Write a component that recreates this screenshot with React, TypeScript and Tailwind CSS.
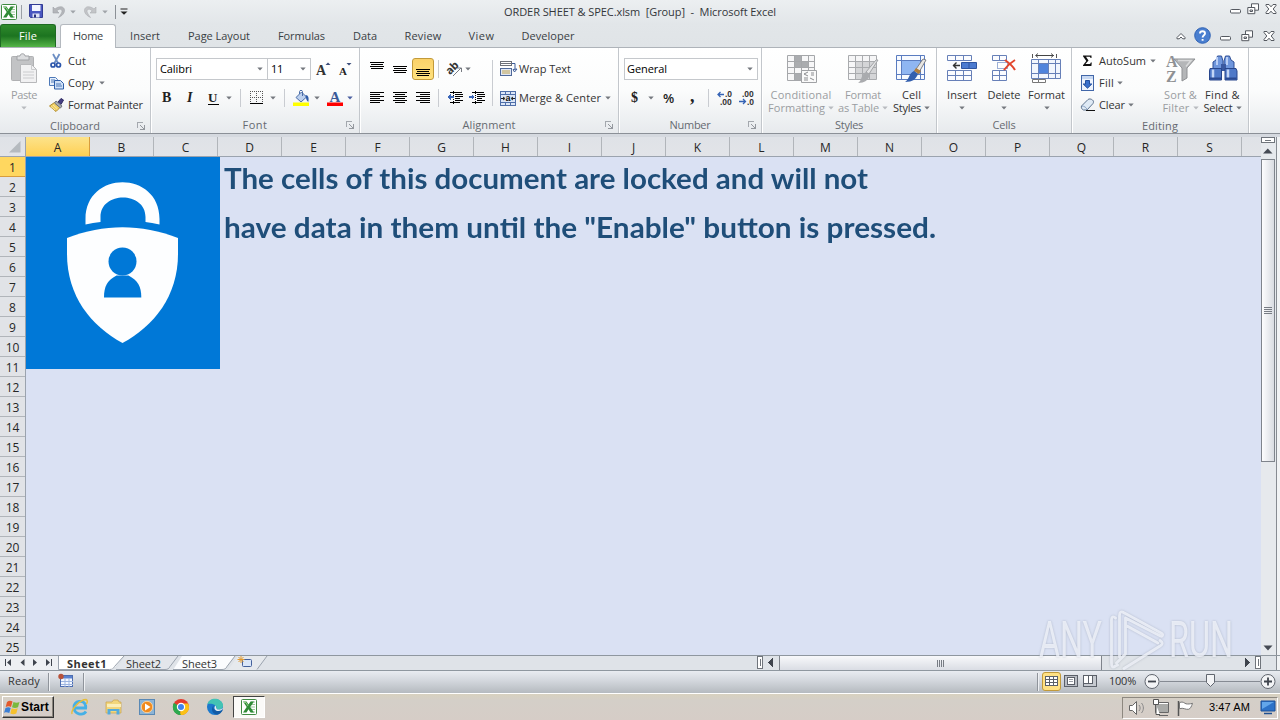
import React, { useLayoutEffect, useRef } from "react";

type FitProps = { text: string; w: number; className?: string; stretch?: boolean };

/* Text that fills a given width, by tracking or by horizontal scaling. */
function Fit({ text, w, className = "", stretch = false }: FitProps) {
  const ref = useRef<HTMLSpanElement>(null);
  useLayoutEffect(() => {
    const el = ref.current;
    if (!el) return;
    el.style.letterSpacing = "0px";
    el.style.transform = "none";
    const natural = el.getBoundingClientRect().width;
    if (stretch) el.style.transform = `scaleX(${w / natural})`;
    else el.style.letterSpacing = `${(w - natural) / text.length}px`;
  }, [text, w, stretch]);
  return (
    <span className={"block shrink-0 whitespace-nowrap " + className} style={{ width: w }}>
      <span ref={ref} className="inline-block origin-left">
        {text}
      </span>
    </span>
  );
}

type IcoProps = {
  x: number;
  y: number;
  w: number;
  h: number;
  className?: string;
  crisp?: boolean;
  children: React.ReactNode;
};

function Ico({ x, y, w, h, className = "", crisp = false, children }: IcoProps) {
  return (
    <svg
      width={w}
      height={h}
      viewBox={`${x} ${y} ${w} ${h}`}
      fill="none"
      shapeRendering={crisp ? "crispEdges" : "auto"}
      className={"block shrink-0 overflow-visible " + className}
    >
      {children}
    </svg>
  );
}

function Caret({ className = "", color = "#74787e" }: { className?: string; color?: string }) {
  return (
    <Ico x={0} y={0} w={6} h={4} className={className}>
      <path d="M.3.5h5.400L3 3.500z" fill={color} />
    </Ico>
  );
}

function Sep({ className = "" }: { className?: string }) {
  return <div className={"w-px shrink-0 bg-[#c9ccd1] " + className} />;
}

function Launcher() {
  return (
    <Ico x={0} y={0} w={8} h={8} crisp className="absolute right-[5px] top-[6px]">
      <path d="M.5 6V.5H6" stroke="#a4a8ae" />
      <path d="M7.500 3v4.500H3M3 3l4 4" stroke="#94989e" />
    </Ico>
  );
}

function Group({ label, lw, className, launcher, children }: { label: string; lw: number; className: string; launcher?: boolean; children: React.ReactNode }) {
  return (
    <div className={"flex h-full shrink-0 flex-col border-r border-[#c3c7cc] shadow-[1px_0_0_#fff] " + className}>
      <div className="h-[68px]">{children}</div>
      <div className="relative flex h-[18px] items-center justify-center pr-2 pt-[2px] text-[#666a70]">
        <Fit text={label} w={lw} className="ml-2 text-[11px]" />
        {launcher && <Launcher />}
      </div>
    </div>
  );
}

function Lines({ x, y, rows }: { x: number; y: number; rows: [number, number][] }) {
  return (
    <>
      {rows.map(([a, b], i) => (
        <path key={i} d={`M${x + a} ${y + i * 2 + 0.5}H${x + b}`} stroke="#000" />
      ))}
    </>
  );
}

function AlignIcon({ kind, className = "" }: { kind: "l" | "c" | "r"; className?: string }) {
  const short: [number, number] = kind === "l" ? [0, 10] : kind === "c" ? [2, 12] : [4, 14];
  const rows: [number, number][] = [[0, 14], short, [0, 14], short, [0, 14], short];
  return (
    <Ico x={0} y={0} w={14} h={12} crisp className={className}>
      <Lines x={0} y={0} rows={rows} />
    </Ico>
  );
}

function VAlign({ pos, className = "" }: { pos: number; className?: string }) {
  return (
    <Ico x={0} y={0} w={14} h={16} crisp className={className}>
      <Lines x={0} y={pos} rows={[[0, 14], [1, 13], [0, 14], [1, 13]]} />
    </Ico>
  );
}

function BigButton({ icon, a, aw, b, bw, muted, className }: { icon: React.ReactNode; a: string; aw: number; b?: string; bw?: number; muted?: boolean; className: string }) {
  const color = muted ? "#b8bbbf" : "#74787e";
  return (
    <div className={"flex shrink-0 flex-col items-center pt-[5px] text-[11px] leading-[13px] " + (muted ? "text-[#9a9da1] " : "text-[#333] ") + className}>
      <div className="flex h-[35px] items-start justify-center">{icon}</div>
      <Fit text={a} w={aw} />
      <div className="flex h-[13px] items-center justify-center gap-[3px]">
        {b && <Fit text={b} w={bw || 0} />}
        <Caret color={color} />
      </div>
    </div>
  );
}

function ExcelIcon() {
  return (
    <Ico x={0} y={0} w={16} h={16}>
      <rect x=".5" y=".5" width="15" height="15" rx="1" fill="#fff" stroke="#3f8a42" />
      <path d="M10 3h4M10 5.500h4M10 8h4M10 10.500h4M10 13h4" stroke="#9cc79a" />
      <path d="M2 2.500h3.500l2 3 2-3H13L9.300 8l3.700 5.500H9.500l-2-3.200-2 3.200H2L5.700 8z" fill="#2f8b36" />
      <path d="M3 3.500h2l2 3.500" stroke="#90cf87" />
    </Ico>
  );
}

function WinButtons({ kind }: { kind: "min" | "restore" | "close" }) {
  return (
    <Ico x={0} y={0} w={12} h={12}>
      {kind === "min" && <rect x="1.500" y="6.500" width="10" height="3.500" rx="1" fill="#fff" stroke="#555960" />}
      {kind === "restore" && (
        <>
          <path d="M4.500.8h7v6.400h-7z" fill="#fff" stroke="#555960" />
          <path d="M.8 4.500h7v6.200h-7z" fill="#fff" stroke="#555960" />
          <path d="M3 7h2.500v1.500H3z" stroke="#555960" />
        </>
      )}
      {kind === "close" && (
        <path d="M1 1.500h3l2 2.300 2-2.300h3v1L8.200 6l2.800 3.500v1H8L6 8.200 4 10.500H1v-1L3.800 6 1 2.500z" fill="#fff" stroke="#555960" />
      )}
    </Ico>
  );
}

function TitleBar() {
  return (
    <div className="flex h-6 shrink-0 items-center bg-linear-to-b from-[#eceff1] to-[#e2e6e9]">
      <div className="flex w-[300px] items-center pb-px pl-px">
        <ExcelIcon />
        <div className="ml-1 h-[14px] w-px bg-[#9ba0a6]" />
        <Ico x={0} y={0} w={15} h={15} className="ml-[7px]">
          <path d="M.5.5h13v13h-12l-1-1z" fill="#4a57c0" stroke="#323c94" />
          <path d="M3 1h8.500v6H3z" fill="#f4f6ff" />
          <path d="M3.500 9.500h7v4h-7z" fill="#dfe3f5" />
          <path d="M5 10.500h2v3H5z" fill="#28307c" />
        </Ico>
        <Ico x={0} y={0} w={14} h={14} className="ml-[8px]">
          <path d="M1 2v6h6L4.800 5.800C7 3.800 9 3.800 9.800 5S9.500 9 6.500 12.500C12 10 13.500 6 12 3.500S6.500 1.200 3 4z" fill="#b4b6ba" stroke="#a0a3a8" strokeWidth=".6" />
        </Ico>
        <Caret className="ml-1" color="#a0a4a9" />
        <Ico x={0} y={0} w={14} h={14} className="ml-[7px]">
          <path d="M13 2v6H7l2.200-2.200C7 3.800 5 3.800 4.200 5S4.500 9 7.500 12.500C2 10 .5 6 2 3.500S7.500 1.200 11 4z" fill="#c3c5c8" stroke="#acaeb3" strokeWidth=".6" />
        </Ico>
        <Caret className="ml-[5px]" color="#a0a4a9" />
        <div className="ml-[7px] h-[14px] w-px bg-[#8b9096]" />
        <Ico x={0} y={0} w={8} h={7} className="ml-1">
          <path d="M.5 1h7" stroke="#222" />
          <path d="M.5 3.500h7L4 6.800z" fill="#222" />
        </Ico>
      </div>
      <div className="flex flex-1 justify-center text-[11px] text-[#33363a]">
        <Fit text="ORDER SHEET &amp; SPEC.xlsm  [Group]  -  Microsoft Excel" w={272} className="whitespace-pre" />
      </div>
      <div className="flex w-[300px] items-start justify-end gap-[6px] pr-[3px] pb-[7px]">
        <WinButtons kind="min" />
        <WinButtons kind="restore" />
        <WinButtons kind="close" />
      </div>
    </div>
  );
}

function TabRow() {
  const tab = "flex h-full shrink-0 items-center justify-center pt-px ";
  return (
    <div className="flex h-6 shrink-0 items-stretch border-b border-[#aeb3b9] bg-linear-to-b from-[#e2e6e9] to-[#e0e4e7] text-[11px] text-[#3b3f44]">
      <div className="flex w-14 shrink-0 items-center justify-center rounded-t-[3px] border border-b-0 border-[#1e6a22] bg-linear-to-b from-[#2f8a2c] via-[#1c7420] to-[#55b548] text-white">
        <Fit text="File" w={18} />
      </div>
      <div className="-mb-px ml-1 flex w-14 shrink-0 items-center justify-center rounded-t-[3px] border border-b-0 border-[#b4b9bf] bg-white">
        <Fit text="Home" w={30} />
      </div>
      <div className={tab + "w-[58px]"}><Fit text="Insert" w={30} /></div>
      <div className={tab + "w-[90px]"}><Fit text="Page Layout" w={62} /></div>
      <div className={tab + "w-[75px]"}><Fit text="Formulas" w={47} /></div>
      <div className={tab + "w-[52px]"}><Fit text="Data" w={24} /></div>
      <div className={tab + "w-[64px]"}><Fit text="Review" w={37} /></div>
      <div className={tab + "w-[53px]"}><Fit text="View" w={26} /></div>
      <div className={tab + "w-[80px]"}><Fit text="Developer" w={53} /></div>
      <div className="flex flex-1 items-center justify-end pr-[5px]">
        <Ico x={0} y={0} w={10} h={8} className="mr-[8px]">
          <path d="M1 5.500 5 1.500l4 4v1.300H6.800L5 5 3.200 6.800H1z" fill="#fff" stroke="#555960" />
        </Ico>
        <Ico x={0} y={0} w={17} h={17} className="mr-[8px]">
          <circle cx="8.500" cy="8.500" r="7.800" fill="#4a7fd0" stroke="#2f62b4" />
          <path d="M6 6.500C6 3.500 11 3.500 11 6.500 11 8.300 8.600 8.300 8.600 10.500M8.600 12v1.800" stroke="#fff" strokeWidth="1.900" />
        </Ico>
        <div className="flex gap-[10px]">
          <WinButtons kind="min" />
          <WinButtons kind="restore" />
          <WinButtons kind="close" />
        </div>
      </div>
    </div>
  );
}

function Clipboard() {
  return (
    <Group label="Clipboard" lw={50} className="w-[151px]" launcher>
      <div className="flex">
        <BigButton
          className="w-12"
          muted
          a="Paste"
          aw={26}
          icon={
            <Ico x={11} y={53} w={28} h={31}>
              <rect x="12.500" y="56.500" width="22" height="24" rx="1" fill="#c2c3c5" stroke="#b0b1b3" />
              <path d="M18 60v-4h3c0-3 5-3 5 0h4v4z" fill="#dcdddf" stroke="#9fa1a4" />
              <path d="M21.500 64.500h11l5 5V82.500h-16z" fill="#f1f1f2" stroke="#b7b8ba" />
              <path d="M32.500 64.500v5h5M24 72h11M24 75h11M24 78h11" stroke="#cbccce" />
            </Ico>
          }
        />
        <div className="flex flex-col pt-[2px] text-[11px] text-[#333]">
          <div className="flex h-[22px] items-center">
            <Ico x={0} y={0} w={16} h={16} className="mr-1">
              <path d="M5 1l5 9M11.500 1l-5 9" stroke="#6d8fc4" strokeWidth="1.800" />
              <circle cx="5" cy="12" r="2" stroke="#2a55ab" strokeWidth="1.700" />
              <circle cx="10.500" cy="12" r="2" stroke="#2a55ab" strokeWidth="1.700" />
            </Ico>
            <Fit text="Cut" w={18} />
          </div>
          <div className="flex h-[22px] items-center">
            <Ico x={0} y={0} w={16} h={14} className="mr-1">
              <path d="M1.500 1.500h6l2 2v6h-8z" fill="#e6effb" stroke="#4d79b8" />
              <path d="M6.500 4.500h6l3 3v5.500h-9z" fill="#cfe0f6" stroke="#2f5fa8" />
              <path d="M3 4h4M3 6h3M8 8h5M8 10h6" stroke="#4d79b8" />
            </Ico>
            <Fit text="Copy" w={26} />
            <Caret className="ml-[5px]" />
          </div>
          <div className="flex h-[22px] items-center">
            <Ico x={0} y={0} w={17} h={15} className="mr-[3px]">
              <path d="M10 4l3-3.500L15.500 2 13 6.500z" fill="#463f85" stroke="#2f2b60" />
              <path d="M6.500 4.500l5.500 5L8 13.500 1.500 8z" fill="#f0cf63" stroke="#b08b2c" />
              <path d="M8 3l6 5-1.500 2L6.500 5z" fill="#a8acb3" stroke="#70747c" />
              <path d="M3 8.500l4 3.500M5 7l4.500 4" stroke="#fbe9a5" />
            </Ico>
            <Fit text="Format Painter" w={75} />
          </div>
        </div>
      </div>
    </Group>
  );
}

function FontGroup() {
  return (
    <Group label="Font" lw={25} className="w-[209px]" launcher>
      <div className="flex flex-col gap-[7px] pt-[10px]">
        <div className="flex h-[22px] items-center pl-[5px] text-[11px] text-black">
          <div className="flex h-[22px] w-[112px] items-center justify-between border border-[#c5c8cc] bg-white pl-[3px] pr-1">
            <Fit text="Calibri" w={32} />
            <Caret />
          </div>
          <div className="flex h-[22px] w-[43px] items-center justify-between border border-l-0 border-[#c5c8cc] bg-white pl-[3px] pr-1">
            <Fit text="11" w={12} />
            <Caret />
          </div>
          <Ico x={0} y={0} w={16} h={16} className="ml-[5px]">
            <text x="0" y="14" fontFamily="Liberation Serif" fontSize="14" fontWeight="bold" fill="#333">A</text>
            <path d="M9.500 4h5L12 1.500z" fill="#3b4d7a" />
          </Ico>
          <Ico x={0} y={0} w={14} h={16} className="ml-[7px]">
            <text x="0" y="14" fontFamily="Liberation Serif" fontSize="11" fontWeight="bold" fill="#222">A</text>
            <path d="M7.500 2h5L10 4.500z" fill="#3b4d7a" />
          </Ico>
        </div>
        <div className="flex h-[22px] items-center pl-[11px] font-['Liberation_Serif',serif] text-[14px] font-bold leading-none text-[#222]">
          <span className="w-[25px]">B</span>
          <span className="w-[21px] italic">I</span>
          <span className="w-[11px] border-b border-black text-[13px] leading-[12px]">U</span>
          <Caret className="ml-[7px]" />
          <Sep className="ml-[8px] h-[18px]" />
          <Ico x={0} y={0} w={14} h={14} crisp className="ml-[9px]">
            <path d="M.5 0v13M6.500 0v13M12.500 0v13M0 .5h13M0 6.500h13" stroke="#555" strokeDasharray="1 1" />
            <path d="M0 12.500h13" stroke="#000" />
          </Ico>
          <Caret className="ml-[6px]" />
          <Sep className="ml-[8px] h-[18px]" />
          <Ico x={0} y={0} w={17} h={17} className="ml-[8px]">
            <path d="M3 7.500L8.500 2l5 5L8 12z" fill="#bcd0ee" stroke="#4c6ea8" />
            <path d="M6.500 4V1.500c0-1.500 3-1.500 3 0V6" stroke="#4c6ea8" />
            <path d="M12.500 5c3 0 3.500 3 2.800 7-1.500-1-2.300-3-2.800-7z" fill="#2f5ca9" />
            <path d="M0 12.500h16V16H0z" fill="#ffff00" />
          </Ico>
          <Caret className="ml-1" />
          <Ico x={0} y={0} w={17} h={17} className="ml-[7px]">
            <text x="2.500" y="11.500" fontFamily="Liberation Serif" fontSize="15" fontWeight="bold" fill="#3a5a98">A</text>
            <path d="M0 12.500h16V16H0z" fill="#ff0000" />
          </Ico>
          <Caret className="ml-[3px]" color="#4a5fa0" />
        </div>
      </div>
    </Group>
  );
}

function IndentIcon({ dir, className = "" }: { dir: "out" | "in"; className?: string }) {
  return (
    <Ico x={0} y={0} w={16} h={14} crisp className={className}>
      <path d="M3 1.500h12M8 3.500h8M8 5.500h8M8 7.500h5M8 9.500h8M3 11.500h10" stroke="#000" />
      <path d="M6.500 0v14" stroke="#000" strokeDasharray="1 1" />
      {dir === "out" ? <path d="M0 6l4-3v2h3v2H4v2z" fill="#3a66b8" /> : <path d="M6 6L2.500 3v2H0v2h2.500v2z" fill="#3a66b8" />}
    </Ico>
  );
}

function Alignment() {
  return (
    <Group label="Alignment" lw={53} className="w-[259px]" launcher>
      <div className="flex">
        <div className="flex w-[132px] shrink-0 flex-col gap-[7px] pt-[10px]">
          <div className="flex h-[22px] items-center pl-[10px]">
            <VAlign pos={1} />
            <VAlign pos={5} className="ml-[9px]" />
            <div className="ml-[5px] flex h-[22px] w-[22px] items-center justify-center rounded-[3px] border border-[#c29a3a] bg-linear-to-b from-[#fbd26a] to-[#ffe27e]">
              <VAlign pos={8} />
            </div>
            <Sep className="ml-1 h-[18px]" />
            <Ico x={0} y={0} w={17} h={16} className="ml-[8px]">
              <text x="-1" y="11" fontFamily="Open Sans" fontSize="11" fontWeight="bold" fill="#333" transform="rotate(-45 5 8)">ab</text>
              <path d="M6 15l8-8M10.500 7h4v4" stroke="#777b82" />
            </Ico>
            <Caret className="ml-[1px]" />
          </div>
          <div className="flex h-[22px] items-center pl-[10px]">
            <AlignIcon kind="l" />
            <AlignIcon kind="c" className="ml-[9px]" />
            <AlignIcon kind="r" className="ml-[9px]" />
            <Sep className="ml-[8px] h-[18px]" />
            <IndentIcon dir="out" className="ml-[8px]" />
            <IndentIcon dir="in" className="ml-[6px]" />
          </div>
        </div>
        <Sep className="mt-[12px] h-[46px]" />
        <div className="flex flex-col gap-[7px] pl-[7px] pt-[10px] text-[11px] text-[#333]">
          <div className="flex h-[22px] items-center">
            <Ico x={0} y={0} w={17} h={16} className="mr-[2px]">
              <rect x=".5" y=".5" width="11" height="4" fill="#fff" stroke="#6d7078" />
              <path d="M0 2.500h12" stroke="#6d7078" />
              <rect x=".5" y="7.500" width="11" height="7" fill="#dfe7f5" stroke="#50699a" />
              <path d="M2 10h8M2 12h8" stroke="#c3a44d" />
              <path d="M12 2.500h3v6M17 8l-2.500 3L13 8.500z" stroke="#3d5c98" />
            </Ico>
            <Fit text="Wrap Text" w={52} />
          </div>
          <div className="flex h-[22px] items-center">
            <Ico x={0} y={0} w={16} h={15} className="mr-[3px]">
              <rect x=".5" y=".5" width="15" height="14" fill="#dce7f8" stroke="#4f6fa9" />
              <path d="M.5 3.500h15M.5 11.500h15M5.500.5v3M10.500.5v3M5.500 11v3.500M10.500 11v3.500" stroke="#4f6fa9" />
              <path d="M1 7.500h3M12 7.500h3M3 6l2 1.500L3 9M13 6l-2 1.500L13 9" stroke="#222" />
              <text x="5.400" y="10" fontFamily="Liberation Sans" fontSize="9" fontWeight="bold" fill="#111">a</text>
            </Ico>
            <Fit text="Merge &amp; Center" w={82} />
            <Caret className="ml-[4px]" />
          </div>
        </div>
      </div>
    </Group>
  );
}

function DecimalIcon({ inc, className = "" }: { inc: boolean; className?: string }) {
  return (
    <Ico x={0} y={0} w={17} h={14} className={className}>
      <g fontFamily="Liberation Sans" fontSize="8.500" fontWeight="bold" fill="#333">
        <text x={inc ? 8 : 3} y="6">{inc ? ".0" : ".00"}</text>
        <text x={inc ? 3 : 8} y="13.500">{inc ? ".00" : ".0"}</text>
      </g>
      {inc ? <path d="M1 3.500h6M3.500 1L1 3.500 3.500 6" stroke="#3563b5" strokeWidth="1.300" /> : <path d="M0 10.500h6M4 8l2.500 2.500L4 13" stroke="#3563b5" strokeWidth="1.300" />}
    </Ico>
  );
}

function NumberGroup() {
  return (
    <Group label="Number" lw={41} className="w-[143px]" launcher>
      <div className="flex flex-col gap-[7px] pl-[5px] pt-[10px]">
        <div className="flex h-[22px] w-[134px] items-center justify-between border border-[#c5c8cc] bg-white pl-[2px] pr-1 text-[11px] text-black">
          <Fit text="General" w={40} />
          <Caret />
        </div>
        <div className="flex h-[22px] items-center text-[#222]">
          <span className="ml-[7px] w-[10px] font-['Liberation_Serif',serif] text-[14px] font-bold leading-none">$</span>
          <Caret className="ml-[7px]" />
          <span className="ml-[9px] w-[14px] font-['Open_Sans',sans-serif] text-[13px] font-semibold leading-none">%</span>
          <span className="ml-[13px] w-[5px] pb-[5px] font-['Liberation_Serif',serif] text-[18px] font-bold leading-none">,</span>
          <Sep className="ml-[13px] h-[18px]" />
          <DecimalIcon inc className="ml-[8px]" />
          <DecimalIcon inc={false} className="ml-[5px]" />
        </div>
      </div>
    </Group>
  );
}

function Styles() {
  return (
    <Group label="Styles" lw={28} className="w-[175px]">
      <div className="flex">
        <BigButton className="ml-[4px] w-[70px]" muted a="Conditional" aw={61} b="Formatting" bw={57}
          icon={
            <Ico x={785} y={53} w={31} h={31}>
              <path d="M787 56h27v24h-27z" fill="#f7f7f8" />
              <path d="M793 56h7v12h-7zM793 74h7v6h-7zM800 62h8v6h-8z" fill="#aaacaf" />
              <path d="M786.500 55.500h27v25h-27zM793.500 55v25M800.500 55v25M807.500 55v25M786 61.500h27M786 67.500h27M786 73.500h27" stroke="#a5a7aa" />
              <path d="M800.500 70.500h15v12h-15z" fill="#fafafa" stroke="#a0a2a5" />
              <path d="M807 72l-4 2 4 2M803 78h4M803 80h4M810 73h3M810 75h3M809 78l4 2" stroke="#8b8d90" />
            </Ico>
          }
        />
        <BigButton className="w-[54px]" muted a="Format" aw={36} b="as Table" bw={41}
          icon={
            <Ico x={848} y={53} w={31} h={31}>
              <path d="M848.500 55.500h28v24h-28z" fill="#f6f6f7" />
              <path d="M855 61h21v18h-21z" fill="#d4d5d7" />
              <path d="M848.500 55.500h28v24h-28zM855.500 55v24M862.500 55v24M869.500 55v24M848 61.500h28M848 67.500h28M848 73.500h28" stroke="#a9abae" />
              <path d="M878 60l-9 14-3-2 10-12z" fill="#e3e4e5" stroke="#a2a4a7" />
              <path d="M866 72l4 3c-2 5-5 8-12 8 4-2 3-9 8-11z" fill="#a9abae" />
            </Ico>
          }
        />
        <BigButton className="w-[43px]" a="Cell" aw={19} b="Styles" bw={28}
          icon={
            <Ico x={896} y={53} w={31} h={31}>
              <path d="M896.500 55.500h28v24h-28z" fill="#f7faff" stroke="#5a7cc0" />
              <path d="M902 60h18v14h-18z" fill="#8fb6f2" />
              <path d="M901.500 55v24M920.500 55v24M896 60.500h28M896 74.500h28" stroke="#5a7cc0" />
              <path d="M926 60l-8 14-4-2 9-13z" fill="#e8e6e2" stroke="#7c7f86" />
              <path d="M916 68l5 3-2 3-5-3z" fill="#b07d3c" />
              <path d="M914 71l4 3c-2 5-5 8-13 8 4-2 4-9 9-11z" fill="#335fae" />
            </Ico>
          }
        />
      </div>
    </Group>
  );
}

function Cells() {
  return (
    <Group label="Cells" lw={23} className="w-[135px]">
      <div className="flex pl-[4px]">
        <BigButton className="w-[42px]" a="Insert" aw={30}
          icon={
            <Ico x={947} y={53} w={31} h={31}>
              <path d="M948 56h24v24h-24z" fill="#fbfcff" />
              <path d="M947.500 55.500h24v5h-24zM955.500 55v5M963.500 55v5M947.500 70.500h24v10h-24zM955.500 70v10M963.500 70v10M947 75.500h24" stroke="#6780b8" />
              <path d="M961.500 62.500h15v6h-15z" fill="#4c7bd0" stroke="#2f55a0" />
              <path d="M969 63v5" stroke="#2f55a0" />
              <path d="M953 65.500h7M956.500 62.500l-3 3 3 3" stroke="#333" strokeWidth="1.400" />
            </Ico>
          }
        />
        <BigButton className="w-[42px]" a="Delete" aw={33}
          icon={
            <Ico x={990} y={53} w={28} h={31}>
              <path d="M992.500 55.500h14v5h-14zM999.500 55v5M992.500 70.500h14v10h-14zM999.500 70v10M992 75.500h14" fill="#fbfcff" stroke="#6780b8" />
              <path d="M997.500 62.500h10v6h-10z" stroke="#3c62b0" strokeDasharray="1 1" />
              <path d="M1005 60c4 3 8 6 10 10M1015 60c-5 3-8 6-11 10" stroke="#e2452c" strokeWidth="2" />
            </Ico>
          }
        />
        <BigButton className="w-[43px]" a="Format" aw={37}
          icon={
            <Ico x={1031} y={53} w={31} h={31}>
              <path d="M1036 55.500h18" stroke="#444" />
              <path d="M1032.500 54v4M1056.500 54v4M1038 53.500l-2.500 2 2.500 2M1051 53.500l2.500 2-2.500 2" stroke="#555" />
              <path d="M1031.500 59.500h29v19h-29z" fill="#f2f6fd" stroke="#6780b8" />
              <path d="M1039 64h9v9h-9z" fill="#4f83dc" />
              <path d="M1038.500 59v19M1048.500 59v19M1055.500 59v19M1031 63.500h29M1031 73.500h29" stroke="#6780b8" />
              <path d="M1032.500 79.500h6v3h-6zM1038.500 79.500h7v3h-7z" fill="#fff" stroke="#777" />
            </Ico>
          }
        />
      </div>
    </Group>
  );
}

function Editing() {
  return (
    <Group label="Editing" lw={36} className="w-[177px]">
      <div className="flex pl-[8px]">
        <div className="flex w-[79px] flex-col pt-[2px] text-[11px] text-[#333]">
          <div className="flex h-[22px] items-center">
            <Ico x={0} y={0} w={15} h={14} className="mr-1">
              <path d="M3 1.500h8.500V4h-1c0-1-.6-1.300-1.500-1.300H6L8.500 6.500 5.500 10H9c1 0 1.500-.3 1.800-1.500h1L11.400 12H3v-.8L6.300 7 3 2.300z" fill="#111" />
            </Ico>
            <Fit text="AutoSum" w={47} />
            <Caret className="ml-[4px]" />
          </div>
          <div className="flex h-[22px] items-center">
            <Ico x={0} y={0} w={15} h={16} className="mr-1">
              <rect x="1.500" y=".5" width="12" height="15" fill="#eef4fd" stroke="#4267a8" />
              <path d="M2 1h11v3H2z" fill="#c7d8f2" />
              <path d="M5.500 5.500h4V9h2.300L7.500 13.200 3.200 9h2.300z" fill="#3a70cc" stroke="#234f9c" />
            </Ico>
            <Fit text="Fill" w={15} />
            <Caret className="ml-[3px]" />
          </div>
          <div className="flex h-[22px] items-center">
            <Ico x={0} y={0} w={15} h={14} className="mr-1">
              <path d="M1.500 8L8 1.500c1-.8 3-.8 4.500.5 1.500 1 1 2.500.5 3.500L7 12H3.500c-2-.8-2.500-2.500-2-4z" fill="#dfeaf5" stroke="#5f7590" />
              <path d="M2 8c2 0 4.500 1.500 5 3.500" stroke="#8ba4c4" />
              <path d="M6 12.500h9" stroke="#111" />
            </Ico>
            <Fit text="Clear" w={26} />
            <Caret className="ml-[3px]" />
          </div>
        </div>
        <BigButton className="w-[43px]" muted a="Sort &amp;" aw={33} b="Filter" bw={27}
          icon={
            <Ico x={1166} y={53} w={30} h={31}>
              <g fontFamily="Liberation Serif" fontWeight="bold" fill="#8f9194" fontSize="16">
                <text x="1166" y="67">A</text>
                <text x="1166" y="82">Z</text>
              </g>
              <path d="M1174 59h21l-8 9v10l-5 3V68z" fill="#b4b6b8" stroke="#8f9194" />
              <path d="M1178 60.500h13l-5 6" stroke="#d9dadb" strokeWidth="1.500" />
            </Ico>
          }
        />
        <BigButton className="w-[41px]" a="Find &amp;" aw={35} b="Select" bw={29}
          icon={
            <Ico x={1207} y={53} w={30} h={31}>
              <path d="M1216.500 56h4l1.500 5v9h-10v-8l3-2zM1224.500 56h4l1.500 4 3 2v8h-10v-9z" fill="#6f96dc" stroke="#2f4f96" />
              <path d="M1216 57v8M1226 57v8" stroke="#b9cef5" strokeWidth="2" />
              <path d="M1220 64h5v7h-5z" fill="#3a59a0" />
              <path d="M1209 68.500h11.500v11.500h-12v-9zM1224 68.500h11l1 2.500v9h-12z" fill="#4f79c8" stroke="#28468c" />
              <path d="M1212 69.500v9M1227 69.500v9" stroke="#c3d6f6" strokeWidth="2.500" />
              <path d="M1209 78.500h11M1224.500 78.500h11" stroke="#2b4a92" strokeWidth="2" />
            </Ico>
          }
        />
      </div>
    </Group>
  );
}

const columns = "ABCDEFGHIJKLMNOPQRS".split("");
const rowNumbers = Array.from({ length: 25 }, (_, i) => i + 1);

function ShieldLock() {
  return (
    <Ico x={26} y={157} w={194} h={212}>
      <path d="M26 157h194v212H26z" fill="#0078d7" />
      <path d="M85.500 224.500V219C85.500 170 159.500 170 159.500 219v5.500c-5-1.300-10-2.100-14-2.600V217c0-26-45-26-45 0v4.900c-5 .5-10 1.300-15 2.600z" fill="#fdfeff" />
      <path d="M67 238c37-14.500 74-14.500 111 0v16c0 42-24 72-55.500 89C91 326 67 296 67 254z" fill="#fdfeff" />
      <circle cx="122.500" cy="261.500" r="14" fill="#0078d7" />
      <path d="M104 297.500c0-11 3-17 12.500-22h12c9.500 5 12.800 11 12.800 22z" fill="#0078d7" />
    </Ico>
  );
}

function Grid() {
  return (
    <div className="flex h-[518px] shrink-0 bg-[#dfe3e8]">
      <div className="flex w-[1261px] flex-col">
        <div className="flex h-5 shrink-0 border-b border-[#9ba3ae] bg-linear-to-b from-[#dfe2e7] to-[#e2e4e8] text-xs text-[#262626]">
          <div className="flex w-[26px] shrink-0 items-end justify-end border-r border-[#9ba3ae] pb-[3px] pr-1">
            <Ico x={0} y={0} w={12} h={12}><path d="M11.500 0v11.500H0z" fill="#b5babf" /></Ico>
          </div>
          {columns.map((c) => (
            <div
              key={c}
              className={
                "flex w-16 shrink-0 items-center justify-center pt-[2px] " +
                (c === "A" ? "border-r border-[#d89c3c] bg-linear-to-b from-[#fce38a] to-[#ffd051]" : "border-r border-[#b1b5ba]")
              }
            >
              {c}
            </div>
          ))}
        </div>
        <div className="flex h-[498px] overflow-hidden">
          <div className="w-[26px] shrink-0 border-r border-[#9ba3ae] text-xs text-[#262626]">
            {rowNumbers.map((n) => (
              <div
                key={n}
                className={
                  "flex h-5 items-center justify-center border-b pt-[2px] leading-none " +
                  (n === 1 ? "border-[#d89c3c] bg-[#ffd75f]" : "border-[#b1b5ba] bg-[#e1e3e7]")
                }
              >
                {n}
              </div>
            ))}
          </div>
          <div className="flex flex-1 items-start bg-[#dae1f3]">
            <ShieldLock />
            <div className="ml-[4px] font-['Lato','Open_Sans',sans-serif] text-[28.5px] font-bold leading-[49px] text-[#1f4e79]">
              <div className="-mt-[3px]">
                <Fit stretch text="The cells of this document are locked and will not" w={644} />
                <Fit stretch text="have data in them until the &quot;Enable&quot; button is pressed." w={712} />
              </div>
            </div>
          </div>
        </div>
      </div>
      <div className="flex w-[16px] flex-col items-center border-r border-[#868b92] bg-[#e6e9ed] pr-px">
        <Ico x={0} y={0} w={14} h={6} crisp>
          <rect x=".5" y=".5" width="13" height="5" fill="#fff" stroke="#70757c" />
          <path d="M4 3.500h6" stroke="#70757c" />
        </Ico>
        <Ico x={0} y={0} w={10} h={6} className="mt-[5px]"><path d="M0 5.500h9.500L4.800.5z" fill="#454a54" /></Ico>
        <div className="mt-[5px] flex h-[303px] w-[14px] items-center justify-center border border-[#7f848c] bg-linear-to-r from-[#fdfdfe] to-[#d9dce2]">
          <Ico x={0} y={0} w={8} h={7} crisp><path d="M0 .5h8M0 2.500h8M0 4.500h8M0 6.500h8" stroke="#777c84" /></Ico>
        </div>
        <div className="flex-1" />
        <Ico x={0} y={0} w={10} h={6} className="mb-[4px]"><path d="M.5.5H9.500L5 5.500z" fill="#454a54" /></Ico>
      </div>
      <div className="flex-1 bg-[#f1f3f5]" />
    </div>
  );
}

function SheetTab({ label, w, className, fill, bold }: { label: string; w: number; className: string; fill: string; bold?: boolean }) {
  return (
    <div className={"relative flex h-[14px] shrink-0 items-center text-[11px] leading-none text-[#333] " + className}>
      <Ico x={0} y={0} w={70} h={14} className="absolute left-0 top-0">
        <path d={bold ? "M.5 0v14h54L66 0z" : "M2 14h51L64 0H11z"} fill={fill} />
        <path d={bold ? "M.5 0v13.500h51c3 0 4-1 5-3L66 0" : "M2 13.500h49c3 0 4-1 5-3L64 0"} stroke="#9ba3ae" />
      </Ico>
      <Fit text={label} w={w} className={"relative " + (bold ? "font-bold" : "")} />
    </div>
  );
}

function SheetBar() {
  return (
    <div className="flex h-4 shrink-0 items-stretch border-y border-[#8f979f] bg-[#dfe3e8]">
      <Ico x={0} y={656} w={58} h={14} className="bg-[#eef0f3]">
        <path d="M5.500 659v7M51.500 659v7" stroke="#3f444d" />
        <path d="M11 659v7l-4-3.500zM24.500 659v7l-4-3.500zM33 659v7l4-3.500zM46 659v7l4-3.500z" fill="#3f444d" />
      </Ico>
      <SheetTab label="Sheet1" w={40} bold fill="#fff" className="z-10 w-[56px] pl-[9px]" />
      <SheetTab label="Sheet2" w={35} fill="#e3e6eb" className="w-[57px] pl-[12px]" />
      <SheetTab label="Sheet3" w={35} fill="#fbfcfe" className="w-[57px] pl-[11px]" />
      <Ico x={228} y={656} w={45} h={14}>
        <path d="M228 670l10-14h29l-10 14z" fill="#e6e9ed" />
        <path d="M257 669.500l10-13.500" stroke="#9ba3ae" />
        <rect x="242.500" y="659.500" width="9" height="7" rx="1" fill="#dae6f8" stroke="#44619c" />
        <path d="M241 656v7M237.500 659.500h7M238.500 657l5 5M243.500 657l-5 5" stroke="#e39b31" />
      </Ico>
      <div className="w-[484px] shrink-0" />
      <Ico x={757} y={656} w={22} h={14} crisp>
        <rect x="757.500" y="656.500" width="5" height="12" fill="#fff" stroke="#70757c" />
        <path d="M760.500 659v7" stroke="#70757c" />
        <path d="M773 658v9l-5-4.500z" fill="#3f444d" />
      </Ico>
      <div className="flex w-[323px] shrink-0 items-center justify-center border-x border-[#7f848c] bg-linear-to-b from-[#f8f9fb] to-[#dadde4]">
        <Ico x={0} y={0} w={8} h={7} crisp><path d="M.5 0v7M2.500 0v7M4.500 0v7M6.500 0v7" stroke="#777c84" /></Ico>
      </div>
      <div className="w-[142px] shrink-0" />
      <Ico x={1244} y={656} w={18} h={14} crisp>
        <path d="M1245 658v9l5-4.500z" fill="#3f444d" />
        <rect x="1255.500" y="656.500" width="5" height="12" fill="#fff" stroke="#70757c" />
        <path d="M1258.500 659v7" stroke="#70757c" />
      </Ico>
      <div className="w-[15px] shrink-0 border-r border-[#868b92]" />
      <div className="flex-1 bg-[#f1f3f5]" />
    </div>
  );
}

function StatusBar() {
  const sep = "h-[18px] w-px shrink-0 bg-[#8f949b] shadow-[1px_0_0_#eef0f3] ";
  return (
    <div className="flex h-[23px] shrink-0 items-center border-b border-white bg-linear-to-b from-[#e9ecf1] via-[#d0d4da] to-[#b5babf] text-[11px] text-[#333]">
      <Fit text="Ready" w={32} className="ml-[8px] pb-[2px]" />
      <div className={sep + "ml-[8px]"} />
      <Ico x={58} y={674} w={17} h={14} className="mb-[2px] ml-[9px]">
        <rect x="60.500" y="675.500" width="12" height="11" fill="#f5f8ff" stroke="#4d6db0" />
        <path d="M61 676h11v2.500H61z" fill="#5a82d0" />
        <path d="M61 681.500h12M61 684.500h12M65 678v9M69 678v9" stroke="#9db5e0" />
        <circle cx="61" cy="676.500" r="2.700" fill="#b8523a" />
      </Ico>
      <div className={sep + "ml-[8px]"} />
      <div className="flex-1" />
      <div className={sep} />
      <div className="ml-[4px] flex items-center pb-[2px]">
        <div className="flex h-[19px] w-[19px] shrink-0 items-center justify-center rounded-[3px] border border-[#c29a3a] bg-[#ffe184]">
          <Ico x={0} y={0} w={13} h={10} crisp><path d="M0 0h13v10H0z" fill="#fff" /><path d="M.5.5h12v9H.5zM4.500 0v10M8.500 0v10M0 3.500h13M0 6.500h13" stroke="#5b6069" /></Ico>
        </div>
        <Ico x={0} y={0} w={14} h={12} crisp className="ml-[3px]"><path d="M.5.5h13v11H.5z" fill="#b9bdc4" stroke="#5b6069" /><path d="M3.500 2.500h7v7h-7z" fill="#fff" stroke="#5b6069" /><path d="M5 4.500h4M5 6.500h4" stroke="#9a9ea6" /></Ico>
        <Ico x={0} y={0} w={14} h={12} crisp className="ml-[5px]"><path d="M.5.5h13v11H.5z" fill="#c6cad0" stroke="#5b6069" /><path d="M1 1h4v7H1zM6 1h3v7H6z" fill="#fff" /><path d="M5.500 1v7.500H1M9.500 1v7.500H5" stroke="#5b6069" /></Ico>
        <Fit text="100%" w={27} className="ml-[12px]" />
        <Ico x={1144} y={672} w={134} h={19} className="ml-[8px] mr-[2px]">
          <path d="M1160 681.500h100" stroke="#868b93" />
          <circle cx="1152" cy="681.500" r="7" fill="#f3f4f6" stroke="#61666f" />
          <path d="M1148 681.500h8" stroke="#3f444d" strokeWidth="1.800" />
          <circle cx="1268" cy="681.500" r="7" fill="#f3f4f6" stroke="#61666f" />
          <path d="M1264 681.500h8M1268 677.500v8" stroke="#3f444d" strokeWidth="1.800" />
          <path d="M1206.500 674.500h8v8l-4 4-4-4z" fill="#f3f4f6" stroke="#61666f" />
        </Ico>
      </div>
    </div>
  );
}

function Taskbar() {
  return (
    <div className="flex h-[26px] shrink-0 items-center bg-linear-to-b from-[#d8d1bf] via-[#d4cfc8] via-25% to-[#d6cdc7]">
      <div className="ml-[2px] flex h-[22px] w-[52px] shrink-0 items-center border border-b-[#333] border-l-white border-r-[#333] border-t-white pl-[2px] shadow-[inset_-1px_-1px_0_#8a857d]">
        <Ico x={0} y={0} w={16} h={16}>
          <path d="M2 3c2-1.800 4-1.500 5.500-.4L6 8C4.500 7 3 6.800.7 8z" fill="#e3592b" />
          <path d="M8.500 3c2 1 4 1 6 0L13 8.300c-2 1-4 1-6 0z" fill="#7ab93c" />
          <path d="M.5 9c2-1 3.600-1 5.200 0L4.300 14C2.500 13-.5 13-1 14z" fill="#3c7fd4" />
          <path d="M6.700 9.300c2 1 4 1 6 0L11.300 14.500c-2 1-4 1-6 0z" fill="#f6c12c" />
        </Ico>
        <Fit text="Start" w={28} className="font-['Liberation_Sans',sans-serif] text-[12px] font-bold text-black" />
      </div>
      <Ico x={70} y={698} w={160} h={18} className="ml-[16px]">
        <path d="M86 711.500c-3 4.500-12 3-12-4s10-8.500 11.500-2c.3 1 .3 2 .2 2.500H75" stroke="#45b0e6" strokeWidth="2.800" />
        <path d="M72 714c-1.500-4 8-14.500 14-14.500 2 .8 1.300 3 .5 4.500" stroke="#e6bd38" strokeWidth="1.400" />
        <path d="M106 702h6l1.500-2H118l1 2h2v11h-15z" fill="#f2d67c" stroke="#c9a24a" strokeWidth=".7" />
        <path d="M107 704h14v3h-14z" fill="#fbeeb8" />
        <path d="M107.500 714.500V709h12v5.500h-3V711h-6v3.500z" fill="#54abdc" />
        <rect x="139.500" y="699.500" width="15" height="15" fill="#8db4d6" stroke="#5a89b5" />
        <circle cx="147" cy="707" r="5.700" fill="#f18a1d" stroke="#fbd09a" />
        <path d="M145 703.500v7l5.500-3.500z" fill="#fff" />
        <circle cx="181" cy="707" r="8" fill="#e33b2e" />
        <path d="M181 707l-7-4a8 8 0 0 0 6 12z" fill="#2da94f" />
        <path d="M181 707h8a8 8 0 0 1-9 8z" fill="#fbc116" />
        <path d="M174 703l4 7 3 5a8 8 0 0 1-7-12z" fill="#2da94f" />
        <path d="M181 703.500h7.200a8 8 0 0 1-7.200 11.500l4-6z" fill="#fbc116" />
        <circle cx="181" cy="707" r="3.600" fill="#3f83ee" stroke="#fff" strokeWidth="1.200" />
        <circle cx="215" cy="707" r="8" fill="#1b78cd" />
        <path d="M207.500 704c2-7 13-7 15.500.5.500 5-4 5.500-6.500 4.500 1.500-4-5-6-9-5z" fill="#43c3b4" />
        <path d="M216 703.500c-4 2-3.500 7 2 7.500 2 0 4-.8 5-1.500-1 3-4 5-6 5.300-6-1.300-7-8-1-11.300z" fill="#135ba6" />
        <path d="M215.500 705.500c1 2 .5 3 1.500 3.700 2 .9 5 0 6-1.700-1 4-6 4.500-8 2-1-1.500-.5-3 .5-4z" fill="#e8eef0" />
      </Ico>
      <div className="ml-[3px] flex h-[22px] w-[32px] shrink-0 items-center justify-center border border-b-white border-l-[#444] border-r-white border-t-[#444] bg-[#fbfaf8]">
        <ExcelIcon />
      </div>
      <div className="flex-1" />
      <div className="mr-[2px] mt-px flex h-[22px] w-[156px] items-center border border-b-white border-l-[#8d8880] border-r-white border-t-[#8d8880] pl-[6px]">
        <Ico x={1129} y={698} w={64} h={18}>
          <path d="M1129.500 704.500h3l4-4v13l-4-4h-3z" fill="#fff" stroke="#666" />
          <path d="M1139 704c1.500 2 1.500 4 0 6M1141.500 702c2.500 3 2.500 7 0 10" stroke="#888" />
          <path d="M1156.500 702.500h12v9h-12z" fill="#a9aaa8" stroke="#fff" />
          <path d="M1155.500 701.500h13v10h-13zM1159 714.500h9" stroke="#666" />
          <path d="M1153.500 698.500v5h5v-5zM1156 703.500v10h4" fill="#fff" stroke="#555" />
          <path d="M1178.500 700v15" stroke="#555" strokeWidth="1.500" />
          <path d="M1179.500 701.500c4-1.500 5 1 6.500 1.300 2 .4 4 .2 6.500-.5-1 3-2 5.500-4 6-3 .6-5-2-9-.6z" fill="#fff" stroke="#777" />
        </Ico>
        <Fit text="3:47 AM" w={41} className="ml-[16px] font-['Liberation_Sans',sans-serif] text-[11px] text-black" />
        <Ico x={1260} y={700} w={16} h={15} className="ml-[10px]">
          <path d="M1261 701h14v10h-14z" fill="#2d72c8" stroke="#1c4f96" />
          <path d="M1262 702h12l-12 7z" fill="#63a6ea" />
          <path d="M1264 713.500h8" stroke="#1f4f90" strokeWidth="1.500" />
        </Ico>
      </div>
    </div>
  );
}

function Watermark() {
  return (
    <div className="pointer-events-none absolute left-[1039px] top-[608px] flex h-[64px] items-center font-['Roboto',sans-serif] text-[50px] font-normal leading-none text-[#f3f5fb]/80 [filter:drop-shadow(0_0_1px_rgba(120,130,150,.5))]">
      <Fit stretch text="ANY" w={63} />
      <Ico x={1106} y={608} w={62} h={64} className="ml-[4px]">
        <path
          d="M1115.500 618c-3-2-4-1-4 2v43c0 4 1 5 4 3l2-1M1119.500 657v-41c0-4 1.500-5 4.500-3.200l37.500 20.500c2 1.200 1 3.500-1 2.700L1125.500 618v36l-9 9M1160 640.500c3 2 3 3.500 0 5.500l-36 22.500M1127 626l31 17"
          stroke="#f3f5fb"
          strokeOpacity=".8"
          strokeWidth="2.800"
          strokeLinecap="round"
          strokeLinejoin="round"
        />
      </Ico>
      <Fit stretch text="RUN" w={64} className="ml-[1px]" />
    </div>
  );
}

export default function App() {
  return (
    <div className="relative flex h-[720px] w-[1280px] flex-col overflow-hidden bg-[#dfe3e8] font-['Open_Sans','Noto_Sans',sans-serif] leading-normal">
      <TitleBar />
      <TabRow />
      <div className="flex h-[86px] shrink-0 border-b border-[#8b9097] bg-linear-to-b from-white via-[#fbfcfc] to-[#e7eaed]">
        <Clipboard />
        <FontGroup />
        <Alignment />
        <NumberGroup />
        <Styles />
        <Cells />
        <Editing />
      </div>
      <div className="h-[3px] shrink-0 bg-[#d5d9df]" />
      <Grid />
      <SheetBar />
      <StatusBar />
      <Taskbar />
      <Watermark />
    </div>
  );
}
